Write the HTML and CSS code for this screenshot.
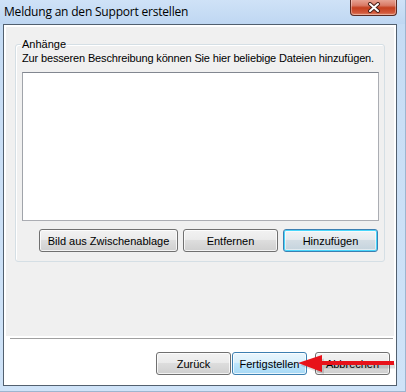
FILE: index.html
```html
<!DOCTYPE html>
<html lang="de">
<head>
<meta charset="utf-8">
<title>Meldung an den Support erstellen</title>
<link rel="stylesheet" href="styles.css">
</head>
<body>
<div class="window">
  <div class="titlebar">
    <span class="title">Meldung an den Support erstellen</span>
    <div class="close">
      <svg width="16" height="11" viewBox="0 0 16 11">
        <path d="M4 2 L12 9 M12 2 L4 9" stroke="#4a2019" stroke-width="4" stroke-linecap="round"/>
        <path d="M4 2 L12 9 M12 2 L4 9" stroke="#ffffff" stroke-width="2" stroke-linecap="round"/>
      </svg>
    </div>
  </div>
  <div class="client">
    <div class="panel">
      <div class="group">
        <span class="legend">Anhänge</span>
        <div class="desc">Zur besseren Beschreibung können Sie hier beliebige Dateien hinzufügen.</div>
        <div class="listbox"></div>
        <div class="group-buttons">
          <button class="btn btn-wide">Bild aus Zwischenablage</button>
          <button class="btn">Entfernen</button>
          <button class="btn btn-default">Hinzufügen</button>
        </div>
      </div>
    </div>
    <div class="separator"></div>
    <div class="footer">
      <button class="btn">Zurück</button>
      <button class="btn btn-hover">Fertigstellen</button>
      <button class="btn btn-cancel">Abbrechen</button>
    </div>
  </div>
  <svg class="arrow" width="110" height="24" viewBox="0 0 110 24">
    <polygon points="3,12 27,5 27,10 98,10 98,15 27,15 27,21" fill="#000" opacity="0.12" transform="translate(1,1.5)"/>
    <polygon points="2,11 26,3 26,9 98,9 98,13 26,13 26,20" fill="#e8121a"/>
  </svg>
</div>
</body>
</html>
```
FILE: styles.css
```css
* { box-sizing: border-box; }
html, body { margin: 0; padding: 0; }
body {
  width: 406px;
  height: 392px;
  overflow: hidden;
  font-family: "Liberation Sans", Arial, sans-serif;
  font-size: 11px;
  color: #000;
}
.window {
  position: relative;
  width: 406px;
  height: 392px;
  background: linear-gradient(180deg, #c4dbf4 0%, #c9def5 30%, #cfe3f8 100%);
  border-right: 1px solid #9db5cf;
  border-bottom: 1px solid #9db5cf;
}
.titlebar {
  height: 24px;
  display: flex;
  align-items: flex-start;
  padding-left: 4px;
  background: linear-gradient(180deg, #cfe2f7 0%, #bfd7f2 100%);
}
.title {
  font-family: "Open Sans", "Noto Sans", sans-serif;
  font-size: 12px;
  letter-spacing: -0.2px;
  line-height: 16px;
  margin-top: 4px;
  color: #000;
}
.close {
  margin-left: auto;
  margin-right: 8px;
  margin-top: -1px;
  width: 47px;
  height: 17px;
  border: 1px solid #5a2a22;
  border-top: none;
  border-radius: 0 0 4px 4px;
  background: linear-gradient(180deg, #e9a99a 0%, #d97a66 40%, #c5401f 55%, #d2583b 85%, #e08a6e 100%);
  box-shadow: inset 0 0 0 1px rgba(255,255,255,0.35);
  display: flex;
  align-items: center;
  justify-content: center;
}
.client {
  margin: 0 8px 0 3px;
  height: 362px;
  border: 1px solid #52606f;
  background: #ffffff;
  padding: 2px;
  display: flex;
  flex-direction: column;
}
.panel {
  height: 309px;
  background: #f0f0f0;
  padding: 17px 9px 0 9px;
}
.group {
  position: relative;
  height: 218px;
  border: 1px solid #d5dfe5;
  border-radius: 3px;
  box-shadow: inset 1px 1px 0 #ffffff;
  padding: 7px 5px 0 6px;
  display: flex;
  flex-direction: column;
}
.legend {
  position: absolute;
  top: -8px;
  left: 5px;
  padding: 0 1px;
  background: #f0f0f0;
  line-height: 14px;
}
.desc {
  line-height: 13px;
  white-space: nowrap;
  letter-spacing: -0.15px;
}
.listbox {
  margin-top: 7px;
  height: 149px;
  background: #fff;
  border: 1px solid #abadb3;
  border-top-color: #828790;
  border-left-color: #a0a4aa;
}
.group-buttons {
  margin-top: 8px;
  display: flex;
  justify-content: flex-end;
  gap: 5px;
  padding-right: 1px;
}
.btn {
  font-family: "Liberation Sans", Arial, sans-serif;
  font-size: 11px;
  color: #000;
  width: 95px;
  height: 23px;
  padding: 0;
  border: 1px solid #707070;
  border-radius: 3px;
  background: linear-gradient(180deg, #f2f2f2 0%, #ebebeb 45%, #dddddd 50%, #cfcfcf 100%);
  box-shadow: inset 0 0 0 1px rgba(255,255,255,0.75);
  line-height: 20px;
}
.btn-wide { width: 139px; }
.btn-default {
  border-color: #3c7fb1;
  box-shadow: inset 0 0 0 1px #48d6fb, inset 0 0 0 2px rgba(255,255,255,0.5);
  background: linear-gradient(180deg, #f0f3f5 0%, #e5ebef 45%, #d3dde4 50%, #c4d3dd 100%);
}
.btn-hover {
  border-color: #3c7fb1;
  background: linear-gradient(180deg, #eaf6fd 0%, #d9f0fc 45%, #bee6fd 50%, #a7d9f5 100%);
}
.separator {
  margin: 2px 1px 0 4px;
  height: 1px;
  background: #a0a0a0;
}
.footer {
  margin-top: 13px;
  display: flex;
  justify-content: flex-end;
  padding-right: 4px;
}
.footer .btn { width: 75px; }
.footer .btn-hover { margin-left: 1px; }
.footer .btn-cancel { margin-left: 8px; }
.arrow {
  position: absolute;
  left: 296px;
  top: 352px;
}
```
